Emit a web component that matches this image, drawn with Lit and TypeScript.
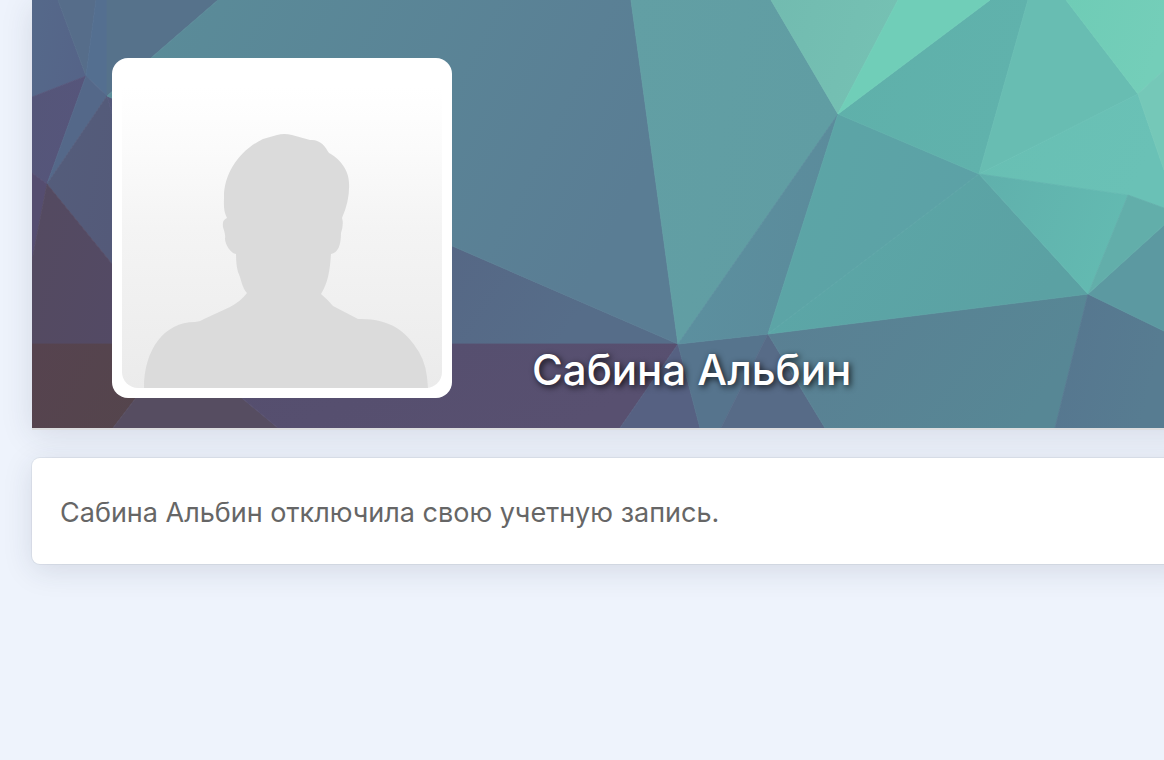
import { LitElement, html, svg, css } from "lit";
import { customElement, property } from "lit/decorators.js";

// Cover artwork facets: polygon points, then one or two colours (left to right blend).
const FACETS: [string, string, string?][] = [
  ["32,0 58,0 86,76 32,97", "#55698a", "#556488"],
  ["58,0 96,0 86,76", "#566d8a"],
  ["96,0 107,0 107,96 86,76", "#546f90"],
  ["107,0 218,0 107,96", "#56728b"],
  ["86,76 32,97 32,173 47,184", "#555679", "#56557b"],
  ["86,76 107,96 47,184", "#546889"],
  ["107,96 47,184 177,344", "#545d7b", "#545878"],
  ["107,96 177,344 678,344", "#55597b", "#566d89"],
  ["32,173 47,184 32,260", "#554d70"],
  ["47,184 32,260 32,344 177,344", "#544a60", "#534a66"],
  ["32,344 177,344 113,428 32,428", "#56434f", "#54454c"],
  ["177,344 113,428 278,428", "#564d61"],
  ["177,344 678,344 620,428 278,428", "#544e6e", "#585070"],
  ["678,344 620,428 700,428", "#566182"],
  ["678,344 768,334 721,428 700,428", "#56748d"],
  ["768,334 721,428 825,428", "#576b87"],
  ["768,334 1088,294 1055,428 825,428", "#5a7f93", "#578795"],
  ["1088,294 1055,428 1164,428 1164,331", "#56768f", "#577c91"],
  ["1088,294 1164,225 1164,331", "#5c99a1"],
  ["218,0 631,0 678,344 107,96", "#5a8d99", "#5a7d94"],
  ["631,0 771,0 838,114 678,344", "#629fa4", "#609da3"],
  ["838,114 678,344 768,334", "#5c91a0", "#5b8b9b"],
  ["838,114 768,334 979,174", "#5ca6a6", "#5ca1a6"],
  ["768,334 979,174 1088,294", "#5ca8a8", "#5ba1a3"],
  ["838,114 979,174 1028,0 990,0", "#5fb0aa", "#60b2ac"],
  ["771,0 898,0 838,114", "#72bbb0", "#75c1b3"],
  ["898,0 990,0 838,114", "#70ceb8"],
  ["979,174 1028,0 1066,0 1138,94", "#68bdb2"],
  ["979,174 1138,94 1164,170 1164,208 1128,195", "#68bfb3", "#6ac1b6"],
  ["979,174 1128,195 1088,294", "#60b0ac", "#63bab1"],
  ["1128,195 1164,208 1164,225 1088,294", "#62aeaa"],
  ["1066,0 1164,0 1164,70 1138,94", "#6fccb6", "#74ceb9"],
  ["1138,94 1164,70 1164,170", "#75c8b8"],
];

@customElement("cover-art")
class CoverArt extends LitElement {
  static styles = css`
    :host { display: block; }
    .art { display: block; width: 100%; height: 100%; }
  `;

  render() {
    return html`
      <svg class="art" viewBox="32 0 1132 428" preserveAspectRatio="xMinYMin slice" aria-hidden="true">
        <defs>
          ${FACETS.map(([, from, to], i) => svg`
            <linearGradient id="f${i}" x1="0" y1="0" x2="1" y2="0.3">
              <stop offset="0" stop-color=${from}></stop>
              <stop offset="1" stop-color=${to ?? from}></stop>
            </linearGradient>`)}
        </defs>
        ${FACETS.map(([points], i) => svg`
          <polygon points=${points} fill="url(#f${i})" stroke="url(#f${i})" stroke-width="0.8" stroke-linejoin="round"></polygon>`)}
      </svg>`;
  }
}

@customElement("user-avatar")
class UserAvatar extends LitElement {
  static styles = css`
    :host {
      display: block;
      box-sizing: border-box;
      width: 340px;
      padding: 10px;
      background: #fff;
      border-radius: 16px;
    }
    .photo { display: block; width: 100%; border-radius: 16px; }
  `;

  render() {
    return html`
      <svg class="photo" viewBox="0 0 320 320" role="img" aria-label="Фото профиля">
        <defs>
          <linearGradient id="bg" x1="0" y1="0" x2="0" y2="1">
            <stop offset="0.06" stop-color="#fff"></stop>
            <stop offset="0.25" stop-color="#fbfbfb"></stop>
            <stop offset="0.5" stop-color="#f4f4f4"></stop>
            <stop offset="1" stop-color="#ebebeb"></stop>
          </linearGradient>
        </defs>
        <rect width="320" height="320" fill="url(#bg)"></rect>
        <path fill="#dbdbdb" d="M22 320C22 282 42 254 73 254Q78 254 82 251L108 239Q119 233 125 225C120 220 119 210 116 204Q114 197 114 186C109 186 103 176 103 171C104 163 100 161 101 155Q101 152 105 150C101 143 102 135 102 129C102 105 118 82 141 71L155 67Q162 65 170 67L188 72C198 71 203 78 207 85C217 90 227 102 227 115Q228 132 220 150Q222 156 219 165C219 177 216 185 209 186C208 202 206 215 199 226Q205 231 211 238L236 251C266 250 284 262 297 284Q305 297 306 320Z"></path>
      </svg>`;
  }
}

@customElement("app-root")
class AppRoot extends LitElement {
  @property() name = "Сабина Альбин";

  static styles = css`
    :host {
      display: block;
      box-sizing: border-box;
      min-height: 100vh;
      padding-left: 32px;
      overflow: hidden;
      background: #eef3fc;
      font-family: Inter, "Noto Sans", sans-serif;
    }
    .page {
      display: flex;
      flex-direction: column;
      gap: 30px;
      margin-right: -32px;
    }
    .cover {
      position: relative;
      display: flex;
      align-items: flex-end;
      gap: 80px;
      padding: 58px 80px 30px;
      box-shadow: 0 2px 0 #dcdddf, 0 6px 30px rgba(40, 50, 70, 0.13);
    }
    .art { position: absolute; inset: 0 32px 0 0; }
    .avatar { position: relative; flex: none; }
    .name {
      position: relative;
      margin: 0;
      font-size: 42px;
      line-height: 56px;
      font-weight: 500;
      color: #fff;
      text-shadow: 2px 2px 6px rgba(0, 0, 0, 0.8);
    }
    .notice {
      position: relative;
      padding: 37px 28px 33px;
      background: #fff;
      border-radius: 8px;
      box-shadow: 0 0 0 1px rgba(60, 70, 90, 0.07), 0 6px 30px rgba(40, 50, 70, 0.13);
    }
    .text {
      margin: 0;
      font-size: 27px;
      line-height: 36px;
      color: #666;
    }
  `;

  render() {
    return html`
      <main class="page">
        <header class="cover">
          <cover-art class="art"></cover-art>
          <user-avatar class="avatar"></user-avatar>
          <h1 class="name">${this.name}</h1>
        </header>
        <section class="notice">
          <p class="text">${this.name} отключила свою учетную запись.</p>
        </section>
      </main>`;
  }
}
